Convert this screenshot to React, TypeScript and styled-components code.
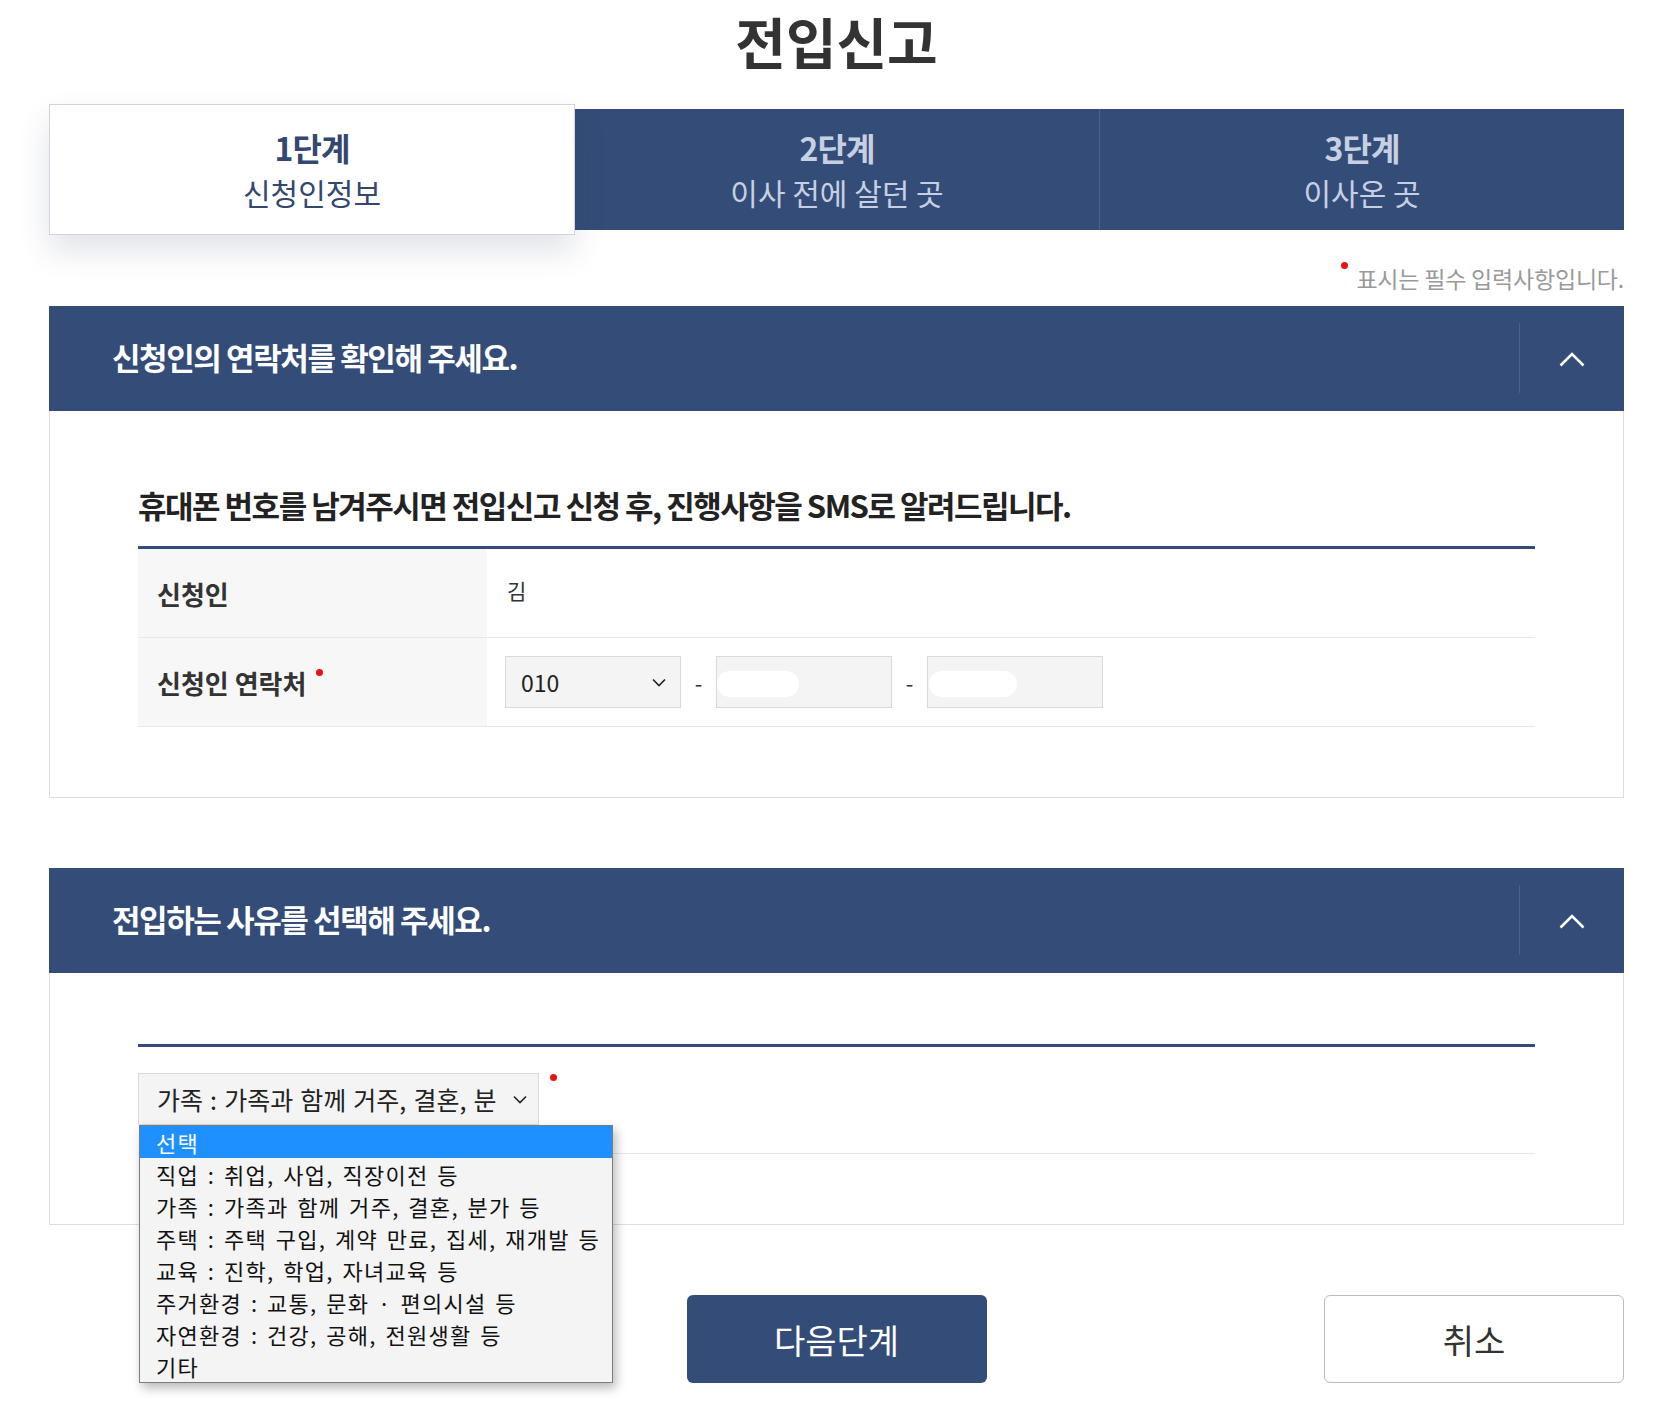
import styled, { createGlobalStyle } from "styled-components";

const NAVY = "#344c78";

const GlobalStyle = createGlobalStyle`
  * { box-sizing: border-box; }
  body {
    margin: 0;
    background: #ffffff;
    color: #333333;
    font-family: "Noto Sans CJK KR", "Noto Sans", sans-serif;
  }
`;

const steps = [
  { no: "1단계", label: "신청인정보" },
  { no: "2단계", label: "이사 전에 살던 곳" },
  { no: "3단계", label: "이사온 곳" },
];

const reasons = [
  "선택",
  "직업 : 취업, 사업, 직장이전 등",
  "가족 : 가족과 함께 거주, 결혼, 분가 등",
  "주택 : 주택 구입, 계약 만료, 집세, 재개발 등",
  "교육 : 진학, 학업, 자녀교육 등",
  "주거환경 : 교통, 문화 · 편의시설 등",
  "자연환경 : 건강, 공해, 전원생활 등",
  "기타",
];

export default function App() {
  return (
    <>
      <GlobalStyle />
      <Page>
        <Title>전입신고</Title>

        <Steps>
          {steps.map((s, i) => (
            <Step key={s.no} $active={i === 0} $divider={i === 2}>
              <StepNo>{s.no}</StepNo>
              <StepLabel>{s.label}</StepLabel>
            </Step>
          ))}
        </Steps>

        <Notice>
          <Dot $variant="notice" />
          표시는 필수 입력사항입니다.
        </Notice>

        <Section>
          <SectionHead>
            <h3>신청인의 연락처를 확인해 주세요.</h3>
            <Toggle aria-label="접기">
              <ChevronUp />
            </Toggle>
          </SectionHead>
          <SectionBody $top={74}>
            <Subtitle>
              휴대폰 번호를 남겨주시면 전입신고 신청 후, 진행사항을 SMS로 알려드립니다.
            </Subtitle>
            <Table>
              <Row>
                <Label>신청인</Label>
                <Value>
                  <Name>김</Name>
                </Value>
              </Row>
              <Row>
                <Label>
                  신청인 연락처
                  <Dot $variant="label" />
                </Label>
                <Value>
                  <Field $width={176}>
                    <span>010</span>
                    <SmallChevron />
                  </Field>
                  <Dash>-</Dash>
                  <Field $width={176}>
                    <Mask $left={0} $width={82} />
                  </Field>
                  <Dash>-</Dash>
                  <Field $width={176}>
                    <Mask $left={1} $width={88} />
                  </Field>
                </Value>
              </Row>
            </Table>
          </SectionBody>
        </Section>

        <Section>
          <SectionHead>
            <h3>전입하는 사유를 선택해 주세요.</h3>
            <Toggle aria-label="접기">
              <ChevronUp />
            </Toggle>
          </SectionHead>
          <SectionBody $top={71}>
            <Table>
              <ReasonRow>
                <ReasonSelect>
                  <span>가족 : 가족과 함께 거주, 결혼, 분</span>
                  <SmallChevron />
                  <Options>
                    {reasons.map((r, i) => (
                      <Option key={r} $selected={i === 0}>
                        {r}
                      </Option>
                    ))}
                  </Options>
                </ReasonSelect>
                <Dot $variant="select" />
              </ReasonRow>
            </Table>
          </SectionBody>
        </Section>

        <Actions>
          <span />
          <Button $primary>다음단계</Button>
          <Button>취소</Button>
        </Actions>
      </Page>
    </>
  );
}

function ChevronUp() {
  return (
    <svg width="26" height="16" viewBox="0 0 26 16" fill="none">
      <polyline
        points="1.5,14.5 13,3 24.5,14.5"
        stroke="#ffffff"
        strokeWidth="2.6"
      />
    </svg>
  );
}

function SmallChevron() {
  return (
    <svg width="14" height="9" viewBox="0 0 14 9" fill="none">
      <polyline points="1,1.5 7,7.5 13,1.5" stroke="#222222" strokeWidth="1.6" />
    </svg>
  );
}

// Style
const Page = styled.div`
  width: 1575px;
  margin-left: 49px;
  padding-bottom: 41px;
`;

const Title = styled.h1`
  margin: 0 0 28px;
  padding-top: 8px;
  height: 76px;
  text-align: center;
  font-size: 55px;
  line-height: 65px;
  font-weight: 700;
  color: #333333;
`;

const Steps = styled.div`
  display: flex;
  align-items: center;
  height: 131px;
`;

const Step = styled.div<{ $active?: boolean; $divider?: boolean }>`
  flex: 1;
  height: ${(p) => (p.$active ? "131px" : "121px")};
  display: flex;
  flex-direction: column;
  align-items: center;
  justify-content: center;
  background: ${(p) => (p.$active ? "#ffffff" : NAVY)};
  color: ${(p) => (p.$active ? "#33476f" : "#c7d0e2")};
  border: ${(p) => (p.$active ? "1px solid #cfd5de" : "none")};
  border-left: ${(p) => (p.$divider ? "1px solid #4a6090" : undefined)};
  box-shadow: ${(p) =>
    p.$active ? "0 16px 30px rgba(40, 60, 100, 0.14)" : "none"};
  position: relative;
  z-index: ${(p) => (p.$active ? 1 : 0)};
`;

const StepNo = styled.div`
  font-size: 32px;
  line-height: 45px;
  font-weight: 700;
  letter-spacing: -1px;
`;

const StepLabel = styled.div`
  font-size: 30px;
  line-height: 45px;
  font-weight: 400;
`;

const Notice = styled.div`
  display: flex;
  justify-content: flex-end;
  align-items: flex-start;
  margin: 28px 0 13px;
  font-size: 23px;
  line-height: 30px;
  color: #999999;
  letter-spacing: -0.2px;
`;

const Dot = styled.span<{ $variant: "notice" | "label" | "select" }>`
  display: inline-block;
  flex: none;
  width: 7px;
  height: 7px;
  border-radius: 50%;
  background: #ee1111;
  margin: ${(p) =>
    p.$variant === "notice"
      ? "-1px 8px 0 0"
      : p.$variant === "label"
        ? "-20px 0 0 10px"
        : "1px 0 0 11px"};
`;

const Section = styled.section`
  margin-bottom: 70px;
`;

const SectionHead = styled.div`
  display: flex;
  align-items: center;
  height: 105px;
  padding-left: 63px;
  background: ${NAVY};

  h3 {
    flex: 1;
    margin: 0 0 4px;
    font-size: 31px;
    line-height: 40px;
    font-weight: 700;
    color: #ffffff;
    letter-spacing: -1.4px;
  }
`;

const Toggle = styled.button`
  position: relative;
  width: 105px;
  height: 105px;
  display: flex;
  align-items: center;
  justify-content: center;
  padding: 0;
  border: none;
  background: transparent;
  cursor: pointer;

  &::before {
    content: "";
    position: absolute;
    left: 0;
    top: 17px;
    bottom: 18px;
    border-left: 1px solid #4a6090;
  }
`;

const SectionBody = styled.div<{ $top: number }>`
  border: 1px solid #dddddd;
  border-top: none;
  padding: ${(p) => p.$top}px 88px 70px;
`;

const Subtitle = styled.p`
  margin: 0 0 21px;
  font-size: 31px;
  line-height: 40px;
  font-weight: 700;
  color: #222222;
  letter-spacing: -1.5px;
`;

const Table = styled.div`
  border-top: 3px solid ${NAVY};
`;

const Row = styled.div`
  display: grid;
  grid-template-columns: 349px 1fr;
  height: 89px;
  border-bottom: 1px solid #e8e8e8;
`;

const Label = styled.div`
  display: flex;
  align-items: center;
  padding-left: 19px;
  background: #f7f7f7;
  font-size: 26px;
  font-weight: 700;
  color: #333333;
`;

const Value = styled.div`
  display: flex;
  align-items: center;
  padding-left: 18px;
`;

const Name = styled.span`
  font-size: 21px;
  color: #333333;
  margin-left: 2px;
  margin-top: -6px;
`;

const Field = styled.div<{ $width: number }>`
  position: relative;
  width: ${(p) => p.$width}px;
  height: 52px;
  display: flex;
  align-items: center;
  justify-content: space-between;
  padding: 0 14px 0 15px;
  background: #f4f4f4;
  border: 1px solid #dadada;
  font-size: 23px;
  color: #222222;
`;

const Mask = styled.span<{ $left: number; $width: number }>`
  position: absolute;
  left: ${(p) => p.$left}px;
  top: 14px;
  width: ${(p) => p.$width}px;
  height: 26px;
  border-radius: 13px;
  background: #ffffff;
`;

const Dash = styled.span`
  width: 35px;
  text-align: center;
  font-size: 22px;
  color: #333333;
`;

const ReasonRow = styled.div`
  display: flex;
  align-items: flex-start;
  height: 107px;
  padding-top: 26px;
  border-bottom: 1px solid #e8e8e8;
`;

const ReasonSelect = styled.div`
  position: relative;
  width: 401px;
  height: 52px;
  display: flex;
  align-items: center;
  justify-content: space-between;
  padding: 0 11px 0 18px;
  background: #f4f4f4;
  border: 1px solid #dadada;
  font-size: 25px;
  word-spacing: 1.5px;
  color: #222222;
  white-space: nowrap;

  & > span {
    overflow: hidden;
    width: 348px;
  }
`;

const Options = styled.ul`
  position: absolute;
  top: 51px;
  left: 0;
  width: 474px;
  margin: 0;
  padding: 0;
  list-style: none;
  background: #f4f4f4;
  border: 1px solid #7c7c7c;
  box-shadow: 3px 5px 10px rgba(0, 0, 0, 0.28);
  z-index: 10;
`;

const Option = styled.li<{ $selected?: boolean }>`
  height: 32px;
  line-height: 32px;
  padding-left: 16px;
  font-size: 22px;
  letter-spacing: 1.3px;
  word-spacing: 2.5px;
  color: ${(p) => (p.$selected ? "#ffffff" : "#111111")};
  background: ${(p) => (p.$selected ? "#1e90ff" : "transparent")};
`;

const Actions = styled.div`
  display: grid;
  grid-template-columns: 1fr 300px 1fr;
  align-items: center;

  button:last-child {
    justify-self: end;
  }
`;

const Button = styled.button<{ $primary?: boolean }>`
  width: 300px;
  height: 88px;
  border-radius: 6px;
  font-family: inherit;
  font-size: 34px;
  font-weight: 400;
  cursor: pointer;
  background: ${(p) => (p.$primary ? NAVY : "#ffffff")};
  color: ${(p) => (p.$primary ? "#ffffff" : "#333333")};
  border: ${(p) => (p.$primary ? "none" : "1px solid #bbbbbb")};
`;
